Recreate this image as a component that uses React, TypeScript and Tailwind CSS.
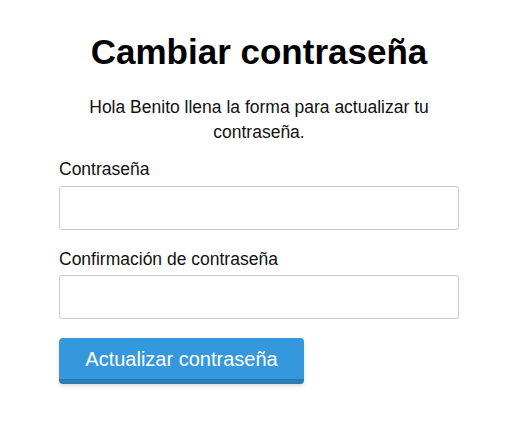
import React from "react";

export default function App() {
  return (
    <div className="w-[525px] h-[432px] bg-white" style={{ fontFamily: '"Liberation Sans", Arial, Helvetica, sans-serif' }}>
      <div className="w-[400px] ml-[59px] pt-[32px] flex flex-col">
        <h1 className="text-[35px] leading-[40px] font-bold text-black text-center">Cambiar contraseña</h1>
        <p className="mt-[23px] text-[17.5px] leading-[24.5px] text-[#111] text-center px-[20px]">
          Hola Benito llena la forma para actualizar tu contraseña.
        </p>
        <label className="mt-[13px] text-[17.5px] leading-[24.5px] text-[#111]">Contraseña</label>
        <input type="password" className="mt-[4px] h-[44px] w-full border border-[#cccccc] rounded-[3px] bg-white outline-none" />
        <label className="mt-[17px] text-[17.5px] leading-[24.5px] text-[#111]">Confirmación de contraseña</label>
        <input type="password" className="mt-[4px] h-[44px] w-full border border-[#cccccc] rounded-[3px] bg-white outline-none" />
        <div>
          <button className="mt-[19px] w-[245px] h-[46px] flex items-center justify-center bg-[#3598dc] border-b-[5px] border-[#2b7bb3] rounded-[4px] text-white text-[20px] leading-[24px] shadow-[0_2px_4px_rgba(0,0,0,0.15)]">
            Actualizar contraseña
          </button>
        </div>
      </div>
    </div>
  );
}
